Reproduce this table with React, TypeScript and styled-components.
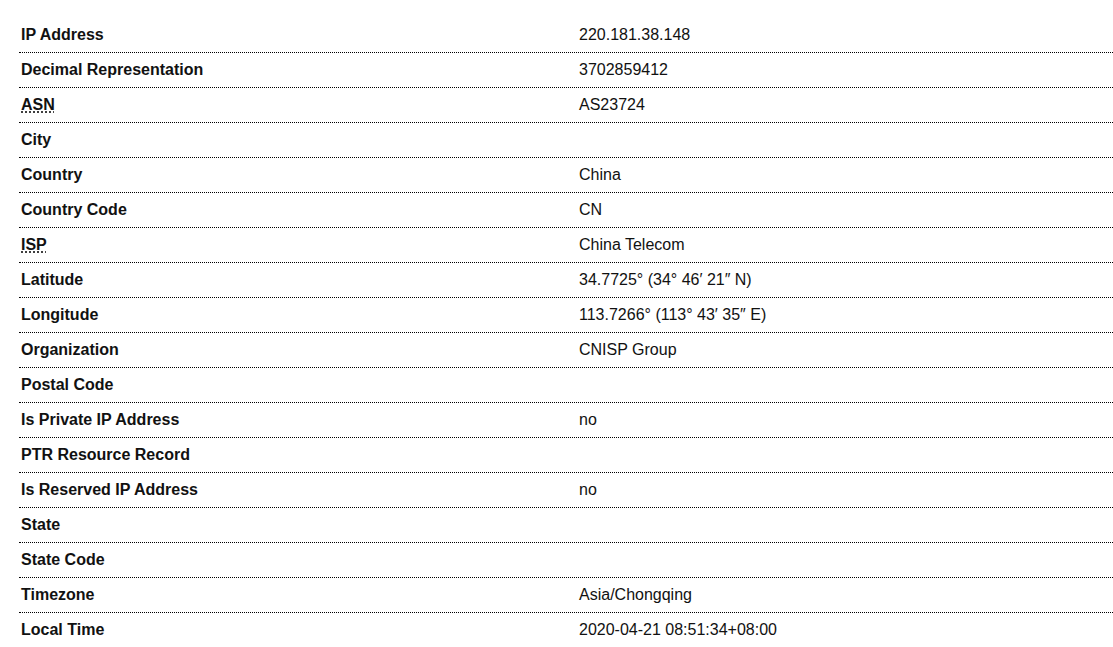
import React from "react";
import styled, { createGlobalStyle } from "styled-components";

const Global = createGlobalStyle`
  html, body {
    margin: 0;
    padding: 0;
    background: #ffffff;
    overflow: hidden;
  }
  body {
    font-family: "Liberation Sans", Arial, sans-serif;
    font-size: 16px;
    color: #111111;
  }
`;

const Page = styled.div`
  padding: 18px 0 0 19px;
  width: 1113px;
  box-sizing: border-box;
`;

const Table = styled.div`
  display: flex;
  flex-direction: column;
  width: 1100px;
`;

const Row = styled.div<{ $last?: boolean }>`
  display: grid;
  grid-template-columns: 559px 1fr;
  align-items: center;
  height: 35px;
  box-sizing: border-box;
  border-bottom: ${(p) => (p.$last ? "none" : "1px dotted #000")};
  line-height: 18px;
`;

const Label = styled.div`
  font-weight: bold;
  padding-left: 2px;
  padding-bottom: 1px;
`;

const Value = styled.div`
  padding-left: 1px;
  padding-bottom: 1px;
`;

const Abbr = styled.abbr`
  text-decoration: underline dotted;
  text-underline-offset: 2px;
  cursor: help;
`;

type Item = { label: React.ReactNode; value: string };

const items: Item[] = [
  { label: "IP Address", value: "220.181.38.148" },
  { label: "Decimal Representation", value: "3702859412" },
  { label: <Abbr title="Autonomous System Number">ASN</Abbr>, value: "AS23724" },
  { label: "City", value: "" },
  { label: "Country", value: "China" },
  { label: "Country Code", value: "CN" },
  { label: <Abbr title="Internet Service Provider">ISP</Abbr>, value: "China Telecom" },
  { label: "Latitude", value: "34.7725° (34° 46′ 21″ N)" },
  { label: "Longitude", value: "113.7266° (113° 43′ 35″ E)" },
  { label: "Organization", value: "CNISP Group" },
  { label: "Postal Code", value: "" },
  { label: "Is Private IP Address", value: "no" },
  { label: "PTR Resource Record", value: "" },
  { label: "Is Reserved IP Address", value: "no" },
  { label: "State", value: "" },
  { label: "State Code", value: "" },
  { label: "Timezone", value: "Asia/Chongqing" },
  { label: "Local Time", value: "2020-04-21 08:51:34+08:00" },
];

export default function App() {
  return (
    <>
      <Global />
      <Page>
        <Table>
          {items.map((it, i) => (
            <Row key={i} $last={i === items.length - 1}>
              <Label>{it.label}</Label>
              <Value>{it.value}</Value>
            </Row>
          ))}
        </Table>
      </Page>
    </>
  );
}
